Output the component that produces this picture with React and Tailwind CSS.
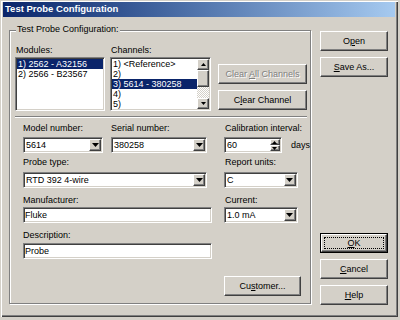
import clsx from 'clsx'

const raised = "border border-t-white border-l-white border-r-[#404040] border-b-[#404040] shadow-[inset_-1px_-1px_0_#808080] bg-[#d4d0c8]"
const sunken = "border border-t-[#808080] border-l-[#808080] border-r-white border-b-white shadow-[inset_1px_1px_0_#404040,inset_-1px_-1px_0_#d4d0c8] p-[1px]"

const Tri = ({ up }) => (
    <svg width="7" height="4" viewBox="0 0 7 4">
        {up ? <path d="M3.5 0 L7 4 L0 4 Z" fill="#000" /> : <path d="M0 0 L7 0 L3.5 4 Z" fill="#000" />}
    </svg>
)

const SmallTri = ({ up }) => (
    <svg width="5" height="3" viewBox="0 0 5 3">
        {up ? <path d="M2.5 0 L5 3 L0 3 Z" fill="#000" /> : <path d="M0 0 L5 0 L2.5 3 Z" fill="#000" />}
    </svg>
)

const Btn = ({ children, className, disabled }) => (
    <div className={clsx("h-[20px] flex items-center justify-center leading-[11px]", raised, disabled && "text-[#808080] [text-shadow:1px_1px_0_#fff]", className)}>
        <span className="whitespace-nowrap">{children}</span>
    </div>
)

const Combo = ({ value, className }) => (
    <div className={clsx("h-[16px] flex bg-white", sunken, className)}>
        <div className="flex-1 leading-[12px] pl-[1px] whitespace-nowrap">{value}</div>
        <div className={clsx("w-[12px] h-[12px] flex items-center justify-center", raised)}>
            <Tri />
        </div>
    </div>
)

const TextBox = ({ value, className }) => (
    <div className={clsx("h-[16px] bg-white leading-[12px] pl-[1px]", sunken, className)}>{value}</div>
)

const Label = ({ children, className }) => (
    <div className={clsx("leading-[11px] h-[11px] whitespace-nowrap", className)}>{children}</div>
)

const ListItem = ({ children, selected }) => (
    <div className={clsx("h-[10px] leading-[10px] pl-[1px] whitespace-nowrap", selected && "bg-[#0a246a] text-white")}>
        {children}
    </div>
)

export default function App() {
    return (
        <div className="w-[400px] h-[320px] bg-[#d4d0c8] font-['Liberation_Sans',Arial,sans-serif] text-[9px] text-black overflow-hidden">
            <div className="w-[398px] h-[317px] flex flex-col px-[3px] pt-[2px] shadow-[inset_1px_1px_0_#d4d0c8,inset_2px_2px_0_#fff,inset_-1px_-1px_0_#404040,inset_-2px_-2px_0_#808080]">
                {/* Title bar */}
                <div className="h-[15px] shrink-0 bg-linear-to-r from-[#0a246a] to-[#a6caf0] flex items-center pl-[2px] text-white font-bold text-[9.5px]">
                    Test Probe Configuration
                </div>

                <div className="flex">
                    {/* Group box */}
                    <div className="ml-[6px] mt-[13px] w-[302px] h-[274px] border border-[#808080] shadow-[inset_1px_1px_0_#fff,1px_1px_0_#fff] flex flex-col">
                        <div className="-mt-[7px] ml-[6px] px-[1px] bg-[#d4d0c8] w-fit leading-[11px]">Test Probe Configuration:</div>

                        {/* Modules / Channels */}
                        <div className="flex pl-[5px] mt-[10px]">
                            <div className="w-[90px]">
                                <Label className="pl-[1px]">Modules:</Label>
                                <div className={clsx("mt-[1px] h-[54px] bg-white overflow-hidden", sunken)}>
                                    <ListItem selected>1) 2562 - A32156</ListItem>
                                    <ListItem>2) 2566 - B23567</ListItem>
                                </div>
                            </div>
                            <div className="w-[101px] ml-[5px]">
                                <Label className="pl-[1px]">Channels:</Label>
                                <div className={clsx("mt-[1px] h-[54px] bg-white flex", sunken)}>
                                    <div className="flex-1 overflow-hidden">
                                        <ListItem>1) &lt;Reference&gt;</ListItem>
                                        <ListItem>2)</ListItem>
                                        <ListItem selected>3) 5614 - 380258</ListItem>
                                        <ListItem>4)</ListItem>
                                        <ListItem>5)</ListItem>
                                    </div>
                                    {/* Scrollbar */}
                                    <div className="w-[12px] flex flex-col">
                                        <div className={clsx("h-[11px] flex items-center justify-center", raised)}><SmallTri up /></div>
                                        <div className={clsx("h-[17px]", raised)}></div>
                                        <div className="flex-1 bg-[repeating-conic-gradient(#fff_0_25%,#d4d0c8_0_50%)] bg-size-[2px_2px]"></div>
                                        <div className={clsx("h-[11px] flex items-center justify-center", raised)}><SmallTri /></div>
                                    </div>
                                </div>
                            </div>
                            <div className="w-[89px] ml-[7px] mt-[19px] flex flex-col gap-[6px]">
                                <Btn disabled>Clear <u>A</u>ll Channels</Btn>
                                <Btn>C<u>l</u>ear Channel</Btn>
                            </div>
                        </div>

                        {/* Separator */}
                        <div className="ml-[5px] mt-[5px] w-[292px] h-[2px] border-t border-t-[#808080] border-b border-b-white"></div>

                        {/* Probe details */}
                        <div className="flex pl-[13px]">
                            <div className="w-[190px] flex flex-col">
                                <div className="flex mt-[5px]">
                                    <div className="w-[80px]">
                                        <Label>Model number:</Label>
                                        <Combo className="mt-[3px]" value="5614" />
                                    </div>
                                    <div className="w-[96px] ml-[8px]">
                                        <Label>Serial number:</Label>
                                        <Combo className="mt-[3px]" value="380258" />
                                    </div>
                                </div>
                                <Label className="mt-[4px]">Probe type:</Label>
                                <Combo className="mt-[4px] w-[184px]" value="RTD 392 4-wire" />
                                <Label className="mt-[7px]">Manufacturer:</Label>
                                <TextBox className="mt-[1px]" value="Fluke" />
                                <Label className="mt-[7px]">Description:</Label>
                                <TextBox className="mt-[2px]" value="Probe" />
                            </div>

                            <div className="ml-[12px] flex flex-col">
                                <Label className="mt-[5px] pl-[1px]">Calibration interval:</Label>
                                <div className="flex items-center mt-[3px]">
                                    <div className={clsx("w-[58px] h-[16px] flex bg-white", sunken)}>
                                        <div className="flex-1 leading-[12px] pl-[1px]">60</div>
                                        <div className="w-[10px] flex flex-col">
                                            <div className={clsx("h-[6px] flex items-center justify-center", raised)}><SmallTri up /></div>
                                            <div className={clsx("h-[6px] flex items-center justify-center", raised)}><SmallTri /></div>
                                        </div>
                                    </div>
                                    <span className="ml-[9px] leading-[11px]">days</span>
                                </div>
                                <Label className="mt-[4px] pl-[1px]">Report units:</Label>
                                <Combo className="mt-[4px] w-[74px]" value="C" />
                                <Label className="mt-[7px] pl-[1px]">Current:</Label>
                                <Combo className="mt-[1px] w-[74px]" value="1.0 mA" />
                                <Btn className="mt-[53px] w-[77px]">Cu<u>s</u>tomer...</Btn>
                            </div>
                        </div>
                    </div>

                    {/* Dialog buttons */}
                    <div className="ml-[9px] mt-[14px] w-[68px] h-[274px] flex flex-col justify-between">
                        <div className="flex flex-col gap-[6px]">
                            <Btn>O<u>p</u>en</Btn>
                            <Btn><u>S</u>ave As...</Btn>
                        </div>
                        <div className="flex flex-col gap-[6px]">
                            <div className="h-[20px] border border-black flex">
                                <div className={clsx("flex-1 flex p-[2px]", raised)}>
                                    <div className="flex-1 border border-dotted border-black flex items-center justify-center leading-[11px]">
                                        <span><u>O</u>K</span>
                                    </div>
                                </div>
                            </div>
                            <Btn><u>C</u>ancel</Btn>
                            <Btn><u>H</u>elp</Btn>
                        </div>
                    </div>
                </div>
            </div>
        </div>
    )
}
